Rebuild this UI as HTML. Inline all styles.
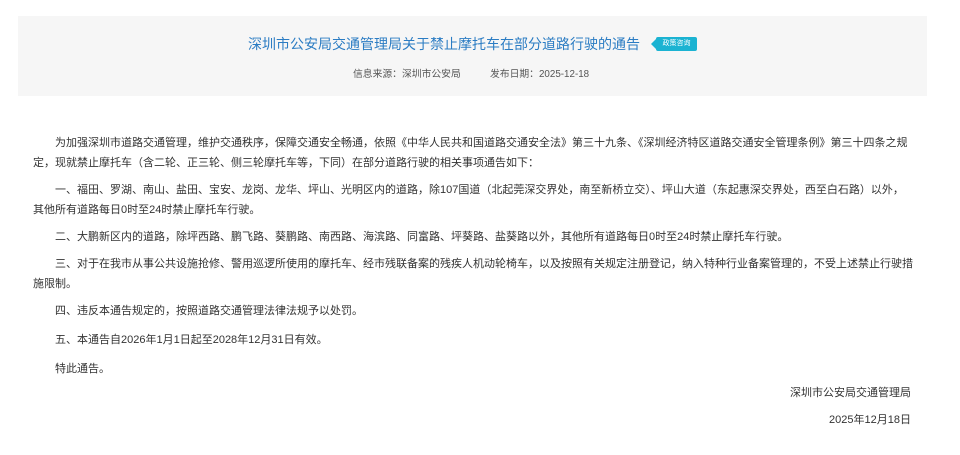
<!DOCTYPE html>
<html><head><meta charset="utf-8"><style>
html,body{margin:0;padding:0;background:#fff;width:960px;height:455px;overflow:hidden;font-family:"Liberation Sans","Noto Sans CJK SC",sans-serif;}
.hd{position:absolute;left:18px;top:16px;width:909px;height:80px;background:#f6f6f6;}
.title{position:absolute;left:248px;top:35px;font-size:14px;color:#2b7cc3;white-space:nowrap;line-height:18px;}
.badge{position:absolute;left:656px;top:37px;width:41px;height:14px;background:#1bb3d2;border-radius:2px;color:#fff;font-size:7px;line-height:14px;text-align:center;}
.badge:before{content:"";position:absolute;left:-5px;top:2px;border-right:5px solid #1bb3d2;border-top:5px solid transparent;border-bottom:5px solid transparent;}
.meta{position:absolute;top:69px;font-size:9.8px;color:#555;white-space:nowrap;line-height:12px;}
.body{position:absolute;left:33px;top:133px;width:880px;font-size:11px;color:#333;line-height:20px;}
.body p{margin:0 0 7px 0;text-indent:22px;white-space:nowrap;}
.r{position:absolute;right:49px;font-size:11px;color:#333;white-space:nowrap;line-height:14px;}
</style></head><body>
<div class="hd"></div>
<div class="title">深圳市公安局交通管理局关于禁止摩托车在部分道路行驶的通告</div>
<div class="badge">政策咨询</div>
<div class="meta" style="left:353px">信息来源：深圳市公安局</div>
<div class="meta" style="left:490px">发布日期：2025-12-18</div>
<div class="body">
<p>为加强深圳市道路交通管理，维护交通秩序，保障交通安全畅通，依照《中华人民共和国道路交通安全法》第三十九条、《深圳经济特区道路交通安全管理条例》第三十四条之规<br>定，现就禁止摩托车（含二轮、正三轮、侧三轮摩托车等，下同）在部分道路行驶的相关事项通告如下：</p>
<p>一、福田、罗湖、南山、盐田、宝安、龙岗、龙华、坪山、光明区内的道路，除107国道（北起莞深交界处，南至新桥立交）、坪山大道（东起惠深交界处，西至白石路）以外，<br>其他所有道路每日0时至24时禁止摩托车行驶。</p>
<p>二、大鹏新区内的道路，除坪西路、鹏飞路、葵鹏路、南西路、海滨路、同富路、坪葵路、盐葵路以外，其他所有道路每日0时至24时禁止摩托车行驶。</p>
<p>三、对于在我市从事公共设施抢修、警用巡逻所使用的摩托车、经市残联备案的残疾人机动轮椅车，以及按照有关规定注册登记，纳入特种行业备案管理的，不受上述禁止行驶措<br>施限制。</p>
<p style="margin-bottom:9px">四、违反本通告规定的，按照道路交通管理法律法规予以处罚。</p>
<p style="margin-bottom:9px">五、本通告自2026年1月1日起至2028年12月31日有效。</p>
<p>特此通告。</p>
</div>
<div class="r" style="top:386px">深圳市公安局交通管理局</div>
<div class="r" style="top:413px">2025年12月18日</div>
</body></html>
